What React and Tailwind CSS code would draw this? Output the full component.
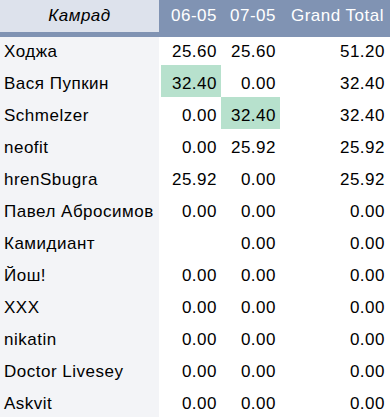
import React from 'react';

const rows = [
    { name: 'Ходжа', a: '25.60', b: '25.60', total: '51.20' },
    { name: 'Вася Пупкин', a: '32.40', b: '0.00', total: '32.40', hiA: true },
    { name: 'Schmelzer', a: '0.00', b: '32.40', total: '32.40', hiB: true },
    { name: 'neofit', a: '0.00', b: '25.92', total: '25.92' },
    { name: 'hrenSbugra', a: '25.92', b: '0.00', total: '25.92' },
    { name: 'Павел Абросимов', a: '0.00', b: '0.00', total: '0.00' },
    { name: 'Камидиант', a: '', b: '0.00', total: '0.00' },
    { name: 'Йош!', a: '0.00', b: '0.00', total: '0.00' },
    { name: 'XXX', a: '0.00', b: '0.00', total: '0.00' },
    { name: 'nikatin', a: '0.00', b: '0.00', total: '0.00' },
    { name: 'Doctor Livesey', a: '0.00', b: '0.00', total: '0.00' },
    { name: 'Askvit', a: '0.00', b: '0.00', total: '0.00' },
];

function Row({ row, first }) {
    const h = first ? 'h-[28px]' : 'h-8';
    return (
        <div className="grid grid-cols-[159px_62px_59px_1fr]">
            <div className={`${h} bg-[#f3f4f7] flex items-end pb-[3px] pl-1 whitespace-nowrap overflow-hidden`}>
                {row.name}
            </div>
            <div className={`${h} pl-[2px]`}>
                <div className={`h-full flex items-end justify-end pb-[3px] pr-1 ${row.hiA ? 'bg-[#b7e1cd]' : ''}`}>
                    {row.a}
                </div>
            </div>
            <div className={`${h} flex items-end justify-end pb-[3px] pr-1 ${row.hiB ? 'bg-[#b7e1cd]' : ''}`}>
                {row.b}
            </div>
            <div className={`${h} flex items-end justify-end pb-[3px] pr-[5px]`}>
                {row.total}
            </div>
        </div>
    );
}

export default function App() {
    return (
        <div className="w-[390px] h-[419px] overflow-hidden bg-white text-black font-['Liberation_Sans',Arial,sans-serif] text-[17px] leading-5 tracking-[0.5px]">
            <div className="grid grid-cols-[159px_62px_59px_1fr] h-[37px] bg-[#8093b3] text-white">
                <div className="h-[32px] bg-[#dde2ec] text-black italic flex items-center justify-center">
                    Камрад
                </div>
                <div className="h-[32px] flex items-center justify-end pr-1">06-05</div>
                <div className="h-[32px] flex items-center justify-end pr-1">07-05</div>
                <div className="h-[32px] flex items-center justify-end pr-[6px]">Grand Total</div>
            </div>
            {rows.map((row, i) => (
                <Row key={i} row={row} first={i === 0} />
            ))}
        </div>
    );
}
